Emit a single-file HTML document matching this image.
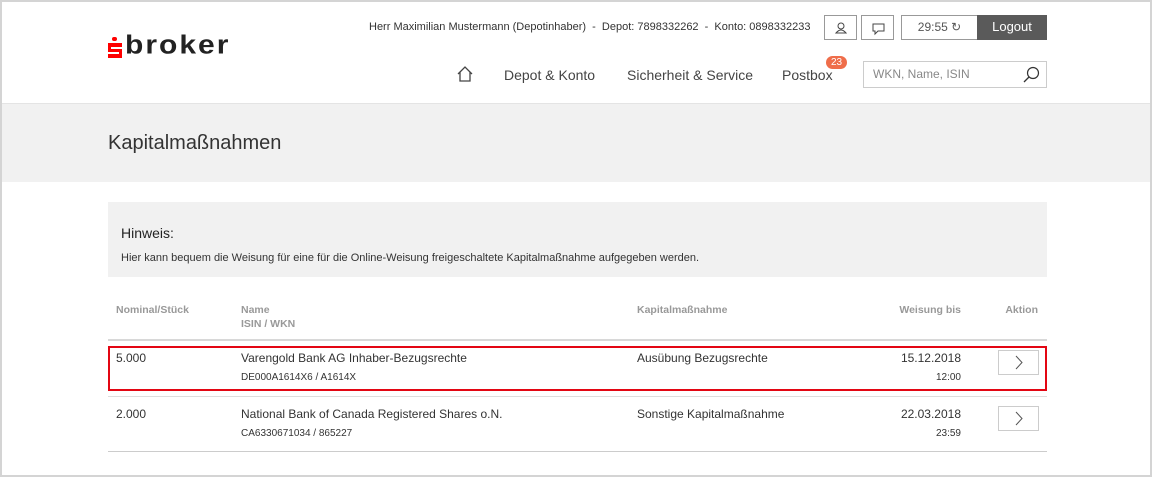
<!DOCTYPE html>
<html><head><meta charset="utf-8"><style>
*{margin:0;padding:0;box-sizing:border-box}
body{width:1152px;height:477px;position:relative;overflow:hidden;background:#fff;font-family:"Liberation Sans",sans-serif;color:#333}
.frame{position:absolute;left:0;top:0;width:1152px;height:477px;border:2px solid #d4d4d4;pointer-events:none;z-index:5}
.a{position:absolute;white-space:nowrap}
.btn{position:absolute;border:1px solid #999;background:#fff}
.hl{position:absolute;left:108px;width:939px;background:#ccc}
.gh{font-size:10.5px;color:#999;font-weight:bold}
.t{font-size:12px;color:#333}
.s{font-size:10px;color:#333}
.r{text-align:right}
.arr{position:absolute;width:41px;height:25px;border:1px solid #ccc;background:#fff}
</style></head><body>
<div class="frame"></div>
<!-- logo -->
<div class="a" style="left:112px;top:37px;width:5px;height:4px;background:#f00;border-radius:2px"></div>
<div class="a" style="left:108px;top:43px;width:14px;height:15px;background:#f00"></div>
<div class="a" style="left:111px;top:47px;width:11px;height:2px;background:#fff"></div>
<div class="a" style="left:108px;top:52px;width:11px;height:2px;background:#fff"></div>
<div class="a" style="left:125px;top:32px;font-size:30px;font-weight:bold;color:#222;letter-spacing:2px;line-height:32px;transform:scaleY(0.85);transform-origin:left top">broker</div>
<!-- top info -->
<div class="a" style="left:369px;top:21px;font-size:11px;color:#333">Herr Maximilian Mustermann (Depotinhaber)&nbsp; -&nbsp; Depot: 7898332262&nbsp; -&nbsp; Konto: 0898332233</div>
<div class="btn" style="left:824px;top:15px;width:33px;height:25px"><svg width="33" height="25"><circle cx="16" cy="10" r="3" fill="none" stroke="#444"/><path d="M11 17 Q16 11 21 17 Z" fill="none" stroke="#444"/></svg></div>
<div class="btn" style="left:861px;top:15px;width:33px;height:25px"><svg width="33" height="25"><path d="M11 8 h11 v7 h-6 l-3 3 v-3 h-2 z" fill="none" stroke="#444"/></svg></div>
<div class="btn" style="left:901px;top:15px;width:77px;height:25px;font-size:12px;color:#555;text-align:center;line-height:23px">29:55 &#x21BB;</div>
<div class="a" style="left:977px;top:15px;width:70px;height:25px;background:#5a5a5a;color:#fff;font-size:13px;text-align:center;line-height:24px">Logout</div>
<!-- nav -->
<svg class="a" style="left:456px;top:66px" width="18" height="16"><path d="M2 8 L9 1 L16 8 M4 6 V15 H14 V6" fill="none" stroke="#444" stroke-width="1.3"/></svg>
<div class="a" style="left:504px;top:67px;font-size:14px;color:#444">Depot &amp; Konto</div>
<div class="a" style="left:627px;top:67px;font-size:14px;color:#444">Sicherheit &amp; Service</div>
<div class="a" style="left:782px;top:67px;font-size:14px;color:#444">Postbox</div>
<div class="a" style="left:826px;top:56px;width:21px;height:13px;border-radius:7px;background:#ef6d4a;color:#fff;font-size:10px;text-align:center;line-height:13px">23</div>
<div class="a" style="left:863px;top:61px;width:184px;height:27px;border:1px solid #ccc;font-size:12px;color:#888;padding-left:9px;line-height:25px">WKN, Name, ISIN</div>
<svg class="a" style="left:1022px;top:65px" width="20" height="20"><circle cx="11" cy="8" r="5.5" fill="none" stroke="#333" stroke-width="1.2"/><path d="M7 12 L2 17" stroke="#333" stroke-width="1.3"/></svg>
<!-- band -->
<div class="a" style="left:0;top:103px;width:1152px;height:1px;background:#e4e4e4"></div>
<div class="a" style="left:0;top:104px;width:1152px;height:78px;background:#f1f1f1"></div>
<div class="a" style="left:108px;top:132px;font-size:20px;color:#333">Kapitalmaßnahmen</div>
<!-- hinweis -->
<div class="a" style="left:108px;top:202px;width:939px;height:75px;background:#f1f1f1"></div>
<div class="a" style="left:121px;top:225px;font-size:14px;color:#222">Hinweis:</div>
<div class="a" style="left:121px;top:252px;font-size:11px;color:#333">Hier kann bequem die Weisung für eine für die Online-Weisung freigeschaltete Kapitalmaßnahme aufgegeben werden.</div>
<!-- table header -->
<div class="a gh" style="left:116px;top:304px">Nominal/Stück</div>
<div class="a gh" style="left:241px;top:304px">Name</div>
<div class="a gh" style="left:241px;top:318px">ISIN / WKN</div>
<div class="a gh" style="left:637px;top:304px">Kapitalmaßnahme</div>
<div class="a gh r" style="left:861px;width:100px;top:304px">Weisung bis</div>
<div class="a gh r" style="left:938px;width:100px;top:304px">Aktion</div>
<div class="hl" style="top:339px;height:2px;background:#d8d8d8"></div>
<!-- row1 -->
<div class="a" style="left:108px;top:346px;width:939px;height:45px;border:2px solid #e30613"></div>
<div class="a t" style="left:116px;top:351px">5.000</div>
<div class="a t" style="left:241px;top:351px">Varengold Bank AG Inhaber-Bezugsrechte</div>
<div class="a s" style="left:241px;top:372px">DE000A1614X6 / A1614X</div>
<div class="a t" style="left:637px;top:351px">Ausübung Bezugsrechte</div>
<div class="a t r" style="left:861px;width:100px;top:351px">15.12.2018</div>
<div class="a s r" style="left:861px;width:100px;top:372px">12:00</div>
<div class="arr" style="left:998px;top:350px"><svg width="40" height="23"><path d="M17 5 L23 11.5 L17 18" fill="none" stroke="#555"/></svg></div>
<div class="hl" style="top:396px;height:1px;background:#ddd"></div>
<!-- row2 -->
<div class="a t" style="left:116px;top:407px">2.000</div>
<div class="a t" style="left:241px;top:407px">National Bank of Canada Registered Shares o.N.</div>
<div class="a s" style="left:241px;top:428px">CA6330671034 / 865227</div>
<div class="a t" style="left:637px;top:407px">Sonstige Kapitalmaßnahme</div>
<div class="a t r" style="left:861px;width:100px;top:407px">22.03.2018</div>
<div class="a s r" style="left:861px;width:100px;top:428px">23:59</div>
<div class="arr" style="left:998px;top:406px"><svg width="40" height="23"><path d="M17 5 L23 11.5 L17 18" fill="none" stroke="#555"/></svg></div>
<div class="hl" style="top:451px;height:1px;background:#ccc"></div>
</body></html>
